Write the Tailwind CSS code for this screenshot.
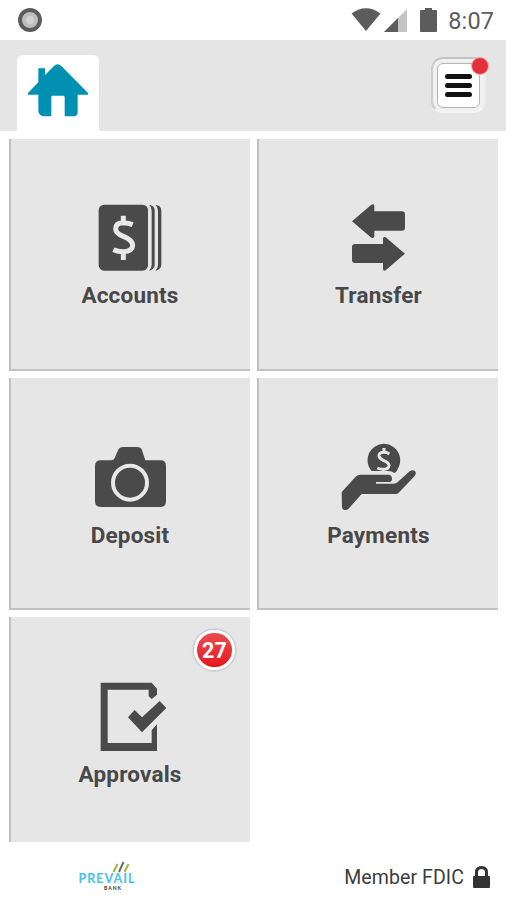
<!DOCTYPE html>
<html lang="en">
<head>
  <meta charset="UTF-8"/>
  <meta name="viewport" content="width=device-width,initial-scale=1.0"/>
  <title>Prevail Bank</title>
  <script src="https://cdn.jsdelivr.net/npm/@tailwindcss/browser@4"></script>
</head>
<body class="bg-white font-[Roboto,sans-serif] text-[#484848]">
<div class="w-[506px] h-[900px] flex flex-col overflow-hidden">

  <!-- STATUS BAR -->
  <div class="h-10 shrink-0 flex items-center justify-between pl-[17px] pr-3 text-[#5c5c5c]">
    <svg class="w-[26px] h-[26px]" viewBox="0 0 26 26">
      <circle cx="13" cy="13" r="10" fill="#bdbdbd" stroke="#5c5c5c" stroke-width="4"/>
      <circle cx="13" cy="13" r="4" fill="#d2d2d2"/>
    </svg>
    <div class="flex items-center">
      <svg class="w-[98px] h-10" viewBox="0 0 98 40" fill="#5c5c5c">
        <path d="M3.500 13.500Q18 3 32.500 13.500L18 31z"/>
        <path d="M59 9v23H36z" fill="#c4c4c4"/>
        <path d="M50 18v14H36z"/>
        <path d="M77 8h7v2h4q1 0 1 1v20q0 1-1 1H73q-1 0-1-1V11q0-1 1-1h4z"/>
      </svg>
      <span class="text-[23.500px] leading-10 pl-[2px] pt-[2px] tracking-[0.1px]">8:07</span>
    </div>
  </div>

  <!-- HEADER -->
  <header class="h-[91px] shrink-0 bg-[#e5e5e5] flex items-start justify-between pl-[17px] pr-[20px]">
    <a href="#" class="mt-[15px] w-[82px] h-[76px] bg-white rounded-t-md flex justify-center">
      <svg class="w-[62px] h-[64px] mt-1" viewBox="82 176 186 192" fill="#0090b2">
        <path d="M116 204H136V224L163 197Q174 187 185 197L265 278V283H234V334Q234 348 220 348H195V290Q195 286 191 286H159Q155 286 155 290V348H131Q116 344 116 331V283H85V278L116 246z"/>
      </svg>
    </a>
    <button class="relative mt-[17px] w-[55px] h-[56px] rounded-xl bg-[#f1f1f1] border-2 border-t-[#c4c4c4] border-l-[#cdcdcd] border-r-[#eeeeee] border-b-[#f4f4f4] flex items-center justify-center">
      <span class="w-[43px] h-[45px] bg-white border border-[#b5b5b5] rounded-md flex flex-col items-center justify-center gap-1">
        <span class="w-[27px] h-[5px] rounded-full bg-[#111]"></span>
        <span class="w-[27px] h-[5px] rounded-full bg-[#111]"></span>
        <span class="w-[27px] h-[5px] rounded-full bg-[#111]"></span>
      </span>
      <span class="absolute -top-[2px] -right-[5px] w-[18px] h-[18px] rounded-full bg-[#e5303c] border border-[#f3a9ad]"></span>
    </button>
  </header>

  <!-- MENU TILES -->
  <main class="grid grid-cols-[241px_241px] grid-rows-[232px_232px_225px] gap-x-[7px] gap-y-[7px] pl-[9px] pt-2 text-center text-[22.500px] tracking-[0.200px] font-bold leading-7">
    <a href="#" class="bg-[#e6e6e6] border-l-2 border-b-2 border-[#c2c2c2] pt-[51px] pr-[2px] flex flex-col items-center">
      <svg class="w-[120px] h-[92px]" viewBox="0 0 360 276" fill="#4a4a4a">
        <rect x="86" y="44" width="148" height="198" rx="16"/>
        <path d="M237 44Q254 46 254 62V224Q254 238 237 242Q245 235 245 224V62Q245 50 237 44z"/>
        <path d="M256 44Q274 46 274 62V224Q274 238 256 242Q264 235 264 224V62Q264 50 256 44z"/>
        <path d="M188 104Q174 98 158 98Q137 99 137 116Q137 130 160 139Q188 150 188 166Q187 184 160 185Q143 185 130 179M160 77V98M160 185V210" fill="none" stroke="#e8e8e8" stroke-width="15"/>
      </svg>
      <span class="-mt-px pl-px">Accounts</span>
    </a>
    <a href="#" class="bg-[#e6e6e6] border-l-2 border-b-2 border-[#c2c2c2] pt-[51px] pr-[2px] flex flex-col items-center">
      <svg class="w-[120px] h-[92px]" viewBox="-6 0 360 276" fill="#4a4a4a">
        <path d="M96 94L154 44Q163 40 163 48V64H246Q255 64 255 73V113Q255 122 246 122H163V138Q163 147 154 143z"/>
        <path d="M255 191L197 142Q189 138 189 146V162H105Q96 162 96 171V210Q96 219 105 219H189V236Q189 245 197 241z"/>
      </svg>
      <span class="-mt-px pl-[2px]">Transfer</span>
    </a>
    <a href="#" class="bg-[#e6e6e6] border-l-2 border-b-2 border-[#c2c2c2] pt-[52px] pr-[2px] flex flex-col items-center">
      <svg class="w-[120px] h-[92px]" viewBox="0 0 360 276" fill="#4a4a4a">
        <path d="M75 108Q75 91 92 91H123Q132 91 135 82L144 61Q148 51 160 51H201Q213 51 216 61L226 91H272Q288 91 288 108V214Q288 231 272 231H92Q75 231 75 214z"/>
        <circle cx="180" cy="158" r="51" fill="none" stroke="#e8e8e8" stroke-width="12"/>
      </svg>
      <span class="-mt-px pl-px">Deposit</span>
    </a>
    <a href="#" class="bg-[#e6e6e6] border-l-2 border-b-2 border-[#c2c2c2] pt-[52px] pr-[2px] flex flex-col items-center">
      <svg class="w-[120px] h-[92px]" viewBox="-6 0 360 276" fill="#4a4a4a">
        <path d="M155 123A49 49 0 1 1 234 115Q230 128 222 129Q216 123 206 123z"/>
        <path d="M208 72Q200 66 190 67Q176 68 177 78Q178 85 190 91Q208 99 207 107Q205 118 190 118Q180 118 172 114M192 54V67M190 118V126" fill="none" stroke="#e8e8e8" stroke-width="9"/>
        <path d="M65 186L107 140Q113 134 121 134H207Q216 136 216 146Q216 156 206 156H168V161H220Q228 161 234 155L269 124Q276 119 284 122Q291 130 284 138L236 188Q233 192 227 192H125L85 237Q80 241 72 239Q66 238 66 230z"/>
      </svg>
      <span class="-mt-px pl-[2px]">Payments</span>
    </a>
    <a href="#" class="relative bg-[#e6e6e6] border-l-2 border-[#c2c2c2] pt-[52px] pr-[2px] flex flex-col items-center">
      <svg class="w-[120px] h-[92px]" viewBox="0 -3 360 276" fill="#4a4a4a">
        <path d="M92 38H245L261 56V74L245 87L236 78V59H113V219H245V181L261 163V243H92z"/>
        <path d="M174 142L194 120L216 142L269 93L289 114L216 187z"/>
      </svg>
      <span class="-mt-px pl-px">Approvals</span>
      <span class="absolute top-[13px] right-[15px] w-[41px] h-[40px] rounded-full bg-gradient-to-b from-[#ea4a50] to-[#e60f1c] border-3 border-white shadow-[0_0_2px_1px_#bbb] text-white text-[21.500px] leading-[35px]">27</span>
    </a>
  </main>

  <!-- FOOTER -->
  <footer class="flex-1 flex items-center justify-between pl-[78px] pr-[15px] pt-2">
    <div class="w-[60px] h-[30px] mt-0.5">
      <svg class="w-[60px] h-[30px]" viewBox="0 0 60 30" font-family="Lato, sans-serif">
        <path d="M39.500 3L35.500 11M50.500 3L46.500 11" stroke="#a9b64a" stroke-width="2.200"/>
        <path d="M45.500 1L41 11" stroke="#6a6a60" stroke-width="2"/>
        <text x="0.500" y="22" font-size="12.500" font-weight="900" fill="#4fc3e3" textLength="56" lengthAdjust="spacing">PREVAIL</text>
        <text x="26" y="29" font-size="5" font-weight="900" fill="#4b4540" textLength="17">BANK</text>
      </svg>
    </div>
    <div class="flex items-center mt-1">
      <span class="text-[19.500px] leading-6 pt-px tracking-[0.1px] text-[#3c3c3c]">Member FDIC</span>
      <svg class="w-[19px] h-[24px] ml-2 -mt-px" viewBox="0 0 19 24">
        <path d="M4.500 12V7.500Q4.500 2.500 9.500 2.500T14.500 7.500V12" fill="none" stroke="#333" stroke-width="3"/>
        <rect x="1" y="11" width="17" height="12" rx="1" fill="#333"/>
      </svg>
    </div>
  </footer>

</div>
</body>
</html>
